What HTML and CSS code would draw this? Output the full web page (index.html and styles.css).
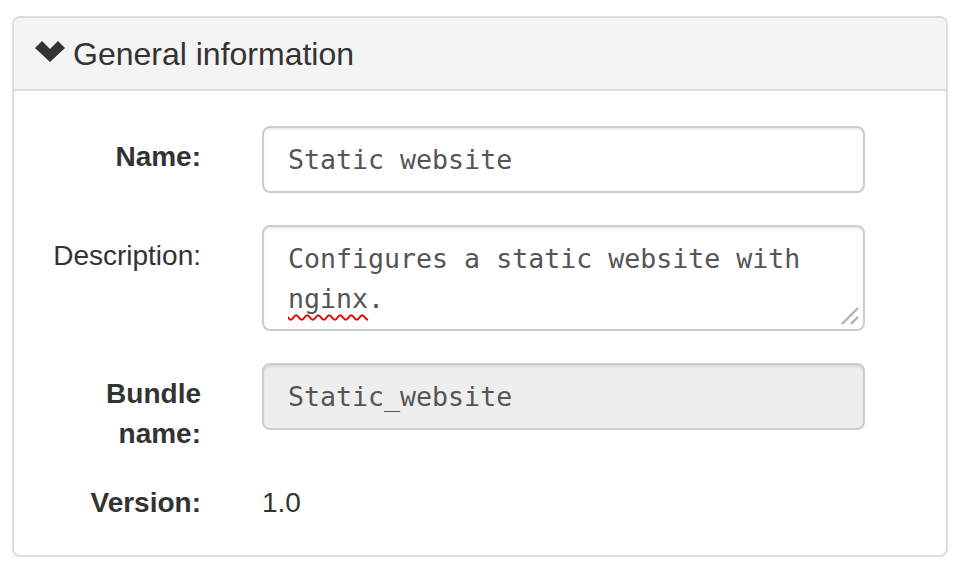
FILE: index.html
```html
<!DOCTYPE html>
<html lang="en">
<head>
<meta charset="utf-8">
<title>General information</title>
<link rel="stylesheet" href="styles.css">
</head>
<body>
<div class="panel">
  <div class="panel-heading">
    <svg class="chevron" viewBox="0 0 30 22" width="30" height="22" aria-hidden="true"><polygon points="0,8 7,1 15,9 23,1 30,8 15,22" fill="#333"/></svg>
    <h3 class="panel-title">General information</h3>
  </div>
  <div class="panel-body">
    <div class="form-row">
      <label class="control-label bold">Name:</label>
      <div class="form-control">Static website</div>
    </div>
    <div class="form-row">
      <label class="control-label">Description:</label>
      <div class="form-control textarea">Configures a static website with <span class="misspelled">nginx</span>.
        <svg class="grip" viewBox="0 0 20 20" width="20" height="20" aria-hidden="true"><line x1="2" y1="18" x2="18" y2="2" stroke="#b3b3b3" stroke-width="2.4"/><line x1="11" y1="18" x2="18" y2="11" stroke="#b3b3b3" stroke-width="2.4"/></svg>
      </div>
    </div>
    <div class="form-row bundle-row">
      <label class="control-label bold">Bundle name:</label>
      <div class="form-control disabled">Static_website</div>
    </div>
    <div class="form-row">
      <label class="control-label bold">Version:</label>
      <div class="static-value">1.0</div>
    </div>
  </div>
</div>
</body>
</html>
```
FILE: styles.css
```css
html, body {
  margin: 0;
  padding: 0;
  background: #fff;
}
body {
  font-family: "Liberation Sans", Arial, sans-serif;
  color: #333;
  padding: 16px 8px 0 12px;
}
.panel {
  width: 936px;
  box-sizing: border-box;
  border: 2px solid #ddd;
  border-radius: 8px;
  background: #fff;
  overflow: hidden;
}
.panel-heading {
  height: 71px;
  background: #f4f4f4;
  border-bottom: 2px solid #ddd;
  display: flex;
  align-items: center;
  padding-left: 21px;
  gap: 8px;
}
.chevron {
  display: block;
  margin-top: -6px;
}
.panel-title {
  margin: 0;
  font-size: 32px;
  font-weight: normal;
  line-height: 36px;
  color: #333;
}
.panel-body {
  padding: 35px 81px 21px 30px;
  display: flex;
  flex-direction: column;
  gap: 32px;
}
.form-row {
  display: grid;
  grid-template-columns: 157px 603px;
  column-gap: 61px;
  align-items: start;
}
.bundle-row {
  margin-bottom: -25px;
}
.control-label {
  text-align: right;
  font-size: 28px;
  line-height: 40px;
  padding-top: 11px;
  padding-bottom: 11px;
  color: #333;
}
.control-label.bold {
  font-weight: bold;
}
.form-control {
  box-sizing: border-box;
  height: 67px;
  border: 2px solid #ccc;
  border-radius: 8px;
  padding: 12px 24px;
  font-family: "DejaVu Sans Mono", monospace;
  font-size: 26.6px;
  line-height: 40px;
  color: #555;
  background: #fff;
  box-shadow: inset 0 2px 2px rgba(0,0,0,0.075);
  white-space: nowrap;
}
.form-control.textarea {
  position: relative;
  height: 106px;
  white-space: normal;
}
.form-control.disabled {
  background: #eee;
}
.misspelled {
  text-decoration: underline wavy #e00;
  text-decoration-thickness: 1.5px;
  text-underline-offset: 6px;
}
.grip {
  position: absolute;
  right: 3px;
  bottom: 3px;
}
.static-value {
  font-size: 28px;
  line-height: 40px;
  padding-top: 11px;
  padding-bottom: 11px;
  color: #333;
}
```
